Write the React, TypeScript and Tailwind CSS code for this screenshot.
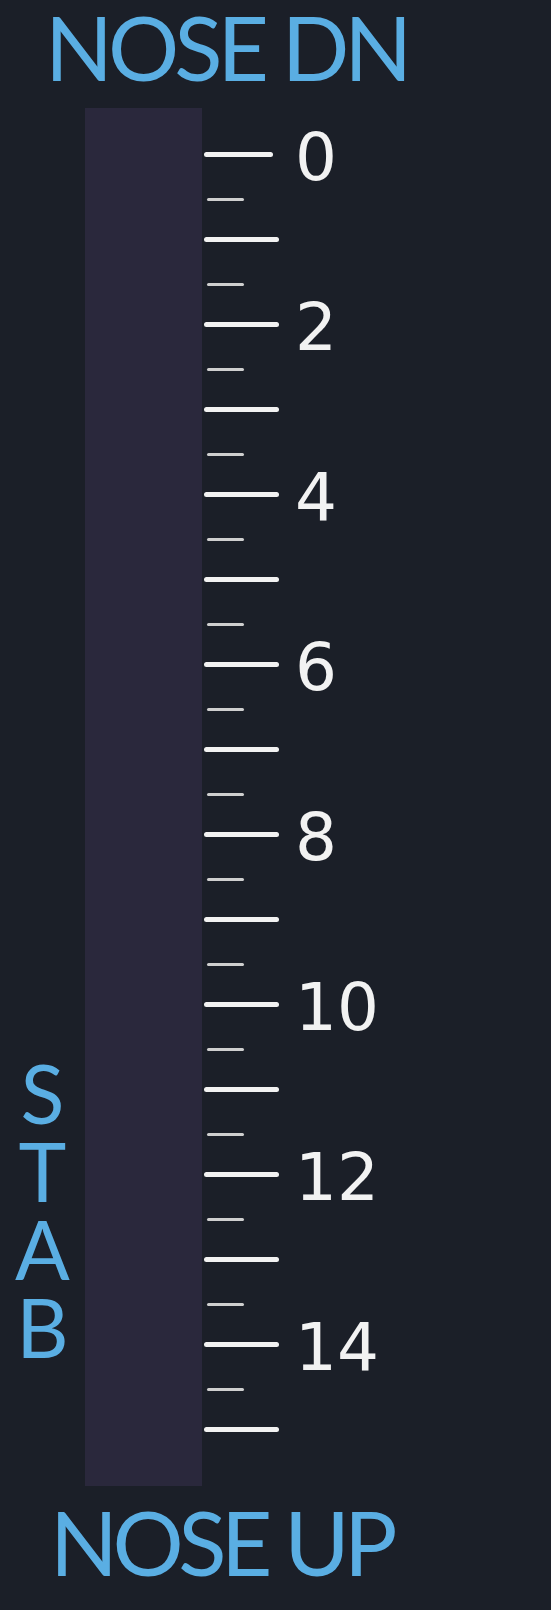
import React from "react";

const majors = Array.from({ length: 16 }, (_, i) => i);

function MajorRow({ n }: { n: number }) {
  return (
    <div className="flex h-[42.5px] items-center">
      <div className="flex w-[93px] pl-[2px]">
        <div
          className={
            n === 0
              ? "h-[5px] w-[69px] rounded-full bg-[#f2f2f2]"
              : "h-[5px] w-[75px] rounded-full bg-[#f2f2f2]"
          }
        />
      </div>
      {n % 2 === 0 ? (
        <span
          className="mt-[6px] text-[66px] leading-none text-[#f2f2f2]"
          style={{ fontFamily: '"DejaVu Sans", sans-serif' }}
        >
          {n}
        </span>
      ) : null}
    </div>
  );
}

function MinorRow() {
  return (
    <div className="flex h-[42.5px] items-center">
      <div className="ml-[5px] mt-[4px] h-[3px] w-[37px] rounded-full bg-[#cfcfcf]" />
    </div>
  );
}

export default function App() {
  const rows: React.ReactNode[] = [];
  majors.forEach((n) => {
    rows.push(<MajorRow key={`M${n}`} n={n} />);
    if (n < 15) rows.push(<MinorRow key={`m${n}`} />);
  });

  return (
    <div
      className="flex h-[1610px] w-[551px] flex-col overflow-hidden bg-[#1b1f28]"
      style={{ fontFamily: 'Lato, "Open Sans", sans-serif' }}
    >
      <div className="mb-[17px] pl-[45px] pt-[2px] text-[89px] leading-none tracking-[-5px] text-[#5aaee3]">
        NOSE DN
      </div>
      <div className="flex h-[1378px]">
        <div className="flex w-[85px] flex-col items-center justify-end pb-[120px] text-[81px] leading-[78px] text-[#5aaee3]">
          <span>S</span>
          <span>T</span>
          <span>A</span>
          <span>B</span>
        </div>
        <div className="h-[1378px] w-[117px] bg-[#2a283c]" />
        <div className="flex flex-col pt-[25.5px]">{rows}</div>
      </div>
      <div className="pl-[50px] pt-[11px] text-[89px] leading-none tracking-[-5.5px] text-[#5aaee3]">
        NOSE UP
      </div>
    </div>
  );
}
